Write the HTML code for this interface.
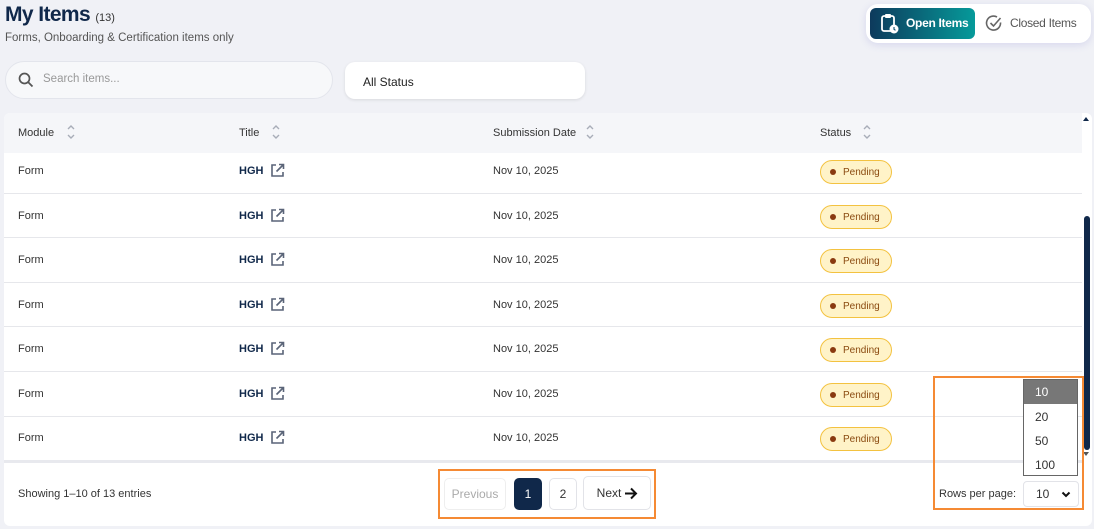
<!DOCTYPE html>
<html><head><style>
*{box-sizing:border-box;margin:0;padding:0}
body{width:1094px;height:529px;background:#f0f1f6;font-family:"Liberation Sans",sans-serif;color:#333;position:relative;overflow:hidden;font-size:11px}
.abs{position:absolute}
h1{position:absolute;left:5px;top:3px;font-size:21px;color:#10284a;font-weight:bold;letter-spacing:-0.6px}
h1 small{font-size:11px;color:#333;font-weight:normal;letter-spacing:0}
.sub{left:5px;top:32px;font-size:11.5px;color:#555}
.toggle{left:866px;top:4px;width:225px;height:39px;background:#fff;border-radius:12px;box-shadow:0 2px 8px rgba(100,100,200,.18)}
.open{left:870px;top:8px;width:105px;height:31px;border-radius:6px;background:linear-gradient(90deg,#0d3a5c,#069a9a);color:#fff;font-weight:bold;font-size:12px;line-height:31px;padding-left:36px;letter-spacing:-0.3px}
.closed{left:1010px;top:8px;height:31px;line-height:31px;color:#555;font-size:12px;letter-spacing:-0.3px}
.search{left:5px;top:61px;width:328px;height:38px;background:#f7f8fa;border:1px solid #e3e5ec;border-radius:19px}
.search span{position:absolute;left:37px;top:11px;color:#999;font-size:11.5px}
.status{left:345px;top:62px;width:240px;height:37px;background:#fff;border-radius:10px;box-shadow:0 1px 3px rgba(0,0,0,.1);padding:13px 0 0 18px;font-size:12px;color:#222;font-weight:500}
.card{left:4px;top:113px;width:1088px;height:413px;background:#fff;border-radius:6px}
.head{left:4px;top:113px;width:1078px;height:40px;background:#f5f6f9;border-radius:6px 0 0 0}
.th{top:126px;font-size:11px;color:#333;height:14px;line-height:14px}
.th svg{position:absolute;top:-2px}
.row{left:4px;width:1078px;height:1px;background:#e6e7eb}
.cell{font-size:11px;color:#333}
.hgh{font-weight:bold;color:#10284a}
.pill{width:72px;height:24px;border:1px solid #f3c240;background:#fff3c8;border-radius:12px;color:#8a4a10;font-size:10px;line-height:24px;padding-left:22px}
.pill:before{content:"";position:absolute;left:9px;top:8px;width:6px;height:6px;border-radius:50%;background:#8a3a10}
.foot{left:4px;top:460px;width:1080px;height:3px;background:#e8e9ee}
.btn{height:32px;border:1px solid #e2e3e8;border-radius:5px;background:#fff;text-align:center;line-height:30px;font-size:12px;top:478px}
.orange{border:2px solid #f58a34}
</style></head><body>
<h1>My Items <small>(13)</small></h1>
<div class="abs sub">Forms, Onboarding &amp; Certification items only</div>
<div class="abs toggle"></div>
<div class="abs open">Open Items</div>
<svg class="abs" style="left:880px;top:13px" width="20" height="22" viewBox="0 0 20 22"><rect x="2" y="3" width="12" height="15" rx="2" fill="none" stroke="#fff" stroke-width="1.8"/><rect x="5" y="1" width="6" height="4" rx="1" fill="#fff"/><circle cx="14" cy="16" r="4.5" fill="#fff"/><path d="M14 14v2.3l1.5 1" stroke="#0d5070" fill="none" stroke-width="1.1"/></svg>
<svg class="abs" style="left:985px;top:14px" width="18" height="18" viewBox="0 0 18 18"><path d="M15.5 8.5A7 7 0 1 1 12 3" fill="none" stroke="#666" stroke-width="1.6"/><path d="M5.5 9l3 3 7-8" fill="none" stroke="#666" stroke-width="1.6"/></svg>
<div class="abs closed">Closed Items</div>
<div class="abs search"><svg style="position:absolute;left:12px;top:10px" width="16" height="16" viewBox="0 0 16 16"><circle cx="6.5" cy="6.5" r="5" fill="none" stroke="#555" stroke-width="1.7"/><path d="M10 10l4.5 4.5" stroke="#555" stroke-width="1.8"/></svg><span>Search items...</span></div>
<div class="abs status">All Status</div>
<div class="abs card"></div>
<div class="abs head"></div>
<div id="th"></div>
<div class="abs" style="left:1083px;top:117px;width:0;height:0;border-left:3px solid transparent;border-right:3px solid transparent;border-bottom:4px solid #10284a"></div>
<div class="abs" style="left:1084px;top:216px;width:6px;height:234px;background:#10284a;border-radius:3px"></div>
<div class="abs" style="left:1083px;top:452px;width:0;height:0;border-left:3px solid transparent;border-right:3px solid transparent;border-top:4px solid #555"></div>

<div id="rows"></div>
<script>
var sv='<svg width="10" height="18" viewBox="0 0 10 18"><path d="M2 6l3-3 3 3M2 12l3 3 3-3" fill="none" stroke="#a8adb8" stroke-width="1.4"/></svg>';
var th=[[18,'Module',66],[239,'Title',271],[493,'Submission Date',585],[820,'Status',862]],g='';
th.forEach(function(a){g+='<div class="abs th" style="left:'+a[0]+'px">'+a[1]+'</div><div class="abs" style="left:'+a[2]+'px;top:123px">'+sv+'</div>';});
document.getElementById('th').innerHTML=g;
var cs=[171,216,260,305,349,394,438],lines=[193,237,282,326,371,416],h='';
for(var i=0;i<7;i++){var c=cs[i];
h+='<div class="abs cell" style="left:18px;top:'+(c-6)+'px">Form</div>';
h+='<div class="abs cell hgh" style="left:239px;top:'+(c-6)+'px">HGH</div>';
h+='<svg class="abs" style="left:270px;top:'+(c-8)+'px" width="15" height="15" viewBox="0 0 15 15"><path d="M6 2H2v11h11V9" fill="none" stroke="#5a6478" stroke-width="1.6"/><path d="M9 1.5h4.5V6M13.5 1.5L6.5 8.5" fill="none" stroke="#5a6478" stroke-width="1.6"/></svg>';
h+='<div class="abs cell" style="left:493px;top:'+(c-6)+'px">Nov 10, 2025</div>';
h+='<div class="abs pill" style="left:820px;top:'+(c-11)+'px">Pending</div>';}
lines.forEach(function(t){h+='<div class="abs row" style="top:'+t+'px"></div>';});
document.getElementById('rows').innerHTML=h;
</script>
<div class="abs foot"></div>
<div class="abs cell" style="left:18px;top:488px">Showing 1–10 of 13 entries</div>
<div class="abs orange" style="left:438px;top:469px;width:218px;height:50px"></div>
<div class="abs btn" style="left:444px;width:62px;color:#aaa;border-color:#eee">Previous</div>
<div class="abs btn" style="left:514px;width:28px;background:#10284a;color:#fff;border-color:#10284a">1</div>
<div class="abs btn" style="left:549px;width:28px">2</div>
<div class="abs btn" style="left:583px;width:68px;top:476px;height:34px;line-height:32px;padding-right:16px">Next<svg style="position:absolute;right:12px;top:10px" width="14" height="13" viewBox="0 0 14 13"><path d="M1 6.5h11M7 1.5l5 5-5 5" fill="none" stroke="#111" stroke-width="2"/></svg></div>
<div class="abs orange" style="left:933px;top:376px;width:151px;height:134px"></div>
<div class="abs" style="left:1023px;top:379px;width:55px;height:97px;background:#fff;border:1px solid #666"></div>
<div class="abs" style="left:1024px;top:380px;width:53px;height:24px;background:#777;color:#fff;font-size:12px;line-height:24px;padding-left:11px">10</div>
<div class="abs" style="left:1035px;top:410px;font-size:12px">20</div>
<div class="abs" style="left:1035px;top:434px;font-size:12px">50</div>
<div class="abs" style="left:1035px;top:458px;font-size:12px">100</div>
<div class="abs cell" style="left:939px;top:488px">Rows per page:</div>
<div class="abs" style="left:1023px;top:481px;width:56px;height:26px;border:1px solid #e2e3e8;border-radius:4px;background:#fff;font-size:12px;line-height:24px;padding-left:12px">10<svg style="position:absolute;right:7px;top:9px" width="10" height="7" viewBox="0 0 10 7"><path d="M1.5 1.5l3.5 3.5 3.5-3.5" fill="none" stroke="#111" stroke-width="2"/></svg></div>
</body></html>
